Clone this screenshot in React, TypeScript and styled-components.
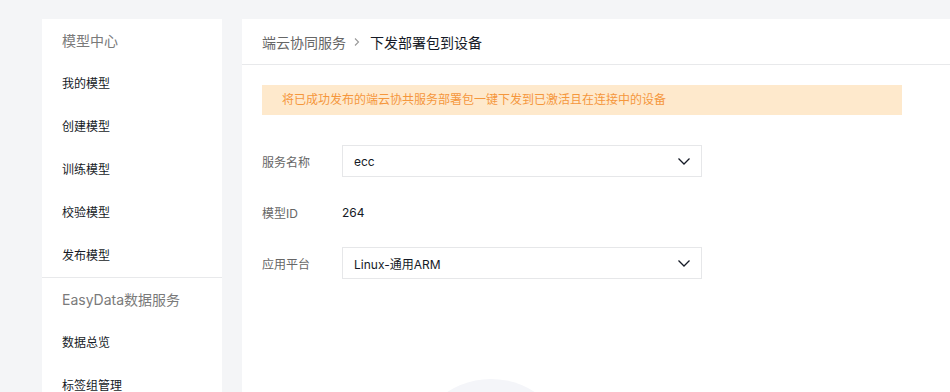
import React from "react";
import styled, { createGlobalStyle } from "styled-components";

const Global = createGlobalStyle`
  html, body { margin: 0; padding: 0; background: #f4f5f7; }
  body { font-family: Inter, "Noto Sans CJK SC", sans-serif; -webkit-font-smoothing: antialiased; }
  * { box-sizing: border-box; }
`;

const Page = styled.div`
  display: flex;
  gap: 20px;
  padding: 19px 0 0 42px;
  height: 392px;
  overflow: hidden;
`;

const Sidebar = styled.nav`
  width: 180px;
  flex-shrink: 0;
  background: #fff;
  display: flex;
  flex-direction: column;
`;

const Group = styled.div<{ $divider?: boolean }>`
  display: flex;
  flex-direction: column;
  border-top: ${(p) => (p.$divider ? "1px solid #e8e9eb" : "none")};
`;

const GroupTitle = styled.div`
  height: 43px;
  line-height: 43px;
  padding-left: 20px;
  font-size: 14px;
  color: #7a7a7a;
`;

const NavItem = styled.div`
  height: 43px;
  line-height: 43px;
  padding-left: 20px;
  font-size: 12px;
  color: #151a26;
`;

const Main = styled.main`
  flex: 1;
  background: #fff;
  position: relative;
  overflow: hidden;
`;

const Header = styled.div`
  height: 46px;
  border-bottom: 1px solid #e8e9eb;
  display: flex;
  align-items: center;
  padding-left: 20px;
  font-size: 14px;
`;

const Crumb = styled.span<{ $current?: boolean }>`
  color: ${(p) => (p.$current ? "#151a26" : "#666")};
`;

const Sep = styled.span`
  display: inline-flex;
  margin: 0 9px 0 7px;
  color: #999;
`;

const Content = styled.div`
  padding: 20px 20px 0;
`;

const Alert = styled.div`
  width: 640px;
  height: 30px;
  line-height: 30px;
  padding-left: 20px;
  background: #fee9cc;
  color: #f5973c;
  font-size: 12px;
`;

const Form = styled.div`
  margin-top: 30px;
  display: flex;
  flex-direction: column;
  gap: 19px;
`;

const Row = styled.div`
  display: flex;
  align-items: center;
  height: 32px;
`;

const Label = styled.div`
  width: 80px;
  font-size: 12px;
  color: #666;
`;

const Value = styled.div`
  font-size: 12px;
  color: #151a26;
`;

const Select = styled.div`
  width: 360px;
  height: 32px;
  border: 1px solid #e6e7e9;
  display: flex;
  align-items: center;
  justify-content: space-between;
  padding: 0 10px 0 11px;
  font-size: 12px;
  color: #151a26;
`;

const Circle = styled.div`
  position: absolute;
  left: 169px;
  top: 360px;
  width: 160px;
  height: 160px;
  border-radius: 50%;
  background: #f4f5f9;
`;

const Chevron = () => (
  <svg width="14" height="14" viewBox="0 0 14 14" fill="none">
    <path d="M1.5 4.5 L7 10 L12.5 4.5" stroke="#151a26" strokeWidth="1.3" />
  </svg>
);

const Arrow = () => (
  <svg width="8" height="10" viewBox="0 0 8 10" fill="none">
    <path d="M2 1.5 L5.5 5 L2 8.5" stroke="#999" strokeWidth="1.1" />
  </svg>
);

export default function App() {
  return (
    <>
      <Global />
      <Page>
        <Sidebar>
          <Group>
            <GroupTitle>模型中心</GroupTitle>
            <NavItem>我的模型</NavItem>
            <NavItem>创建模型</NavItem>
            <NavItem>训练模型</NavItem>
            <NavItem>校验模型</NavItem>
            <NavItem>发布模型</NavItem>
          </Group>
          <Group $divider>
            <GroupTitle>EasyData数据服务</GroupTitle>
            <NavItem>数据总览</NavItem>
            <NavItem>标签组管理</NavItem>
          </Group>
        </Sidebar>
        <Main>
          <Header>
            <Crumb>端云协同服务</Crumb>
            <Sep>
              <Arrow />
            </Sep>
            <Crumb $current>下发部署包到设备</Crumb>
          </Header>
          <Content>
            <Alert>将已成功发布的端云协共服务部署包一键下发到已激活且在连接中的设备</Alert>
            <Form>
              <Row>
                <Label>服务名称</Label>
                <Select>
                  <span>ecc</span>
                  <Chevron />
                </Select>
              </Row>
              <Row>
                <Label>模型ID</Label>
                <Value>264</Value>
              </Row>
              <Row>
                <Label>应用平台</Label>
                <Select>
                  <span>Linux-通用ARM</span>
                  <Chevron />
                </Select>
              </Row>
            </Form>
          </Content>
          <Circle />
        </Main>
      </Page>
    </>
  );
}
